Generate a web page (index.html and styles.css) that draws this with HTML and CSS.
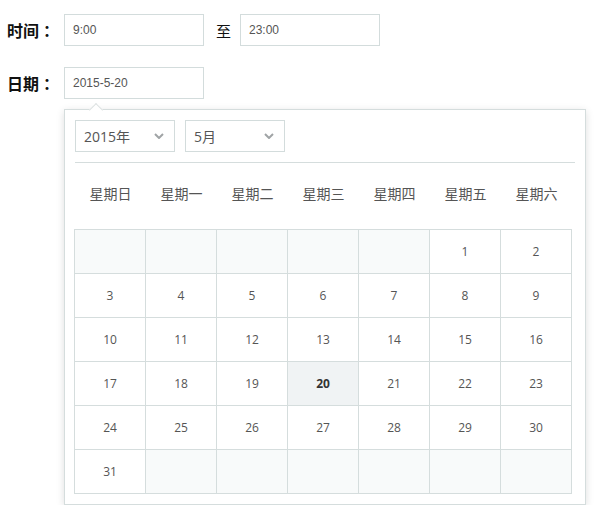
FILE: index.html
```html
<!DOCTYPE html>
<html>
<head>
<meta charset="utf-8">
<link rel="stylesheet" href="styles.css">
</head>
<body>
<div class="form">
  <div class="row">
    <span class="label">时间<span class="colon">：</span></span>
    <div class="input">9:00</div>
    <span class="sep">至</span>
    <div class="input">23:00</div>
  </div>
  <div class="row2">
    <span class="label label2">日期<span class="colon">：</span></span>
    <div class="field">
      <div class="input">2015-5-20</div>
      <div class="popup">
        <div class="arrow"></div>
        <div class="selects">
          <div class="select"><span>2015年</span><svg width="10" height="6" viewBox="0 0 10 6"><polyline points="1,1 5,5 9,1" fill="none" stroke="#a0a4a6" stroke-width="2"/></svg></div>
          <div class="select"><span>5月</span><svg width="10" height="6" viewBox="0 0 10 6"><polyline points="1,1 5,5 9,1" fill="none" stroke="#a0a4a6" stroke-width="2"/></svg></div>
        </div>
        <div class="divider"></div>
        <div class="weekdays">
          <span>星期日</span><span>星期一</span><span>星期二</span><span>星期三</span><span>星期四</span><span>星期五</span><span>星期六</span>
        </div>
        <div class="days">
          <div class="day empty"></div><div class="day empty"></div><div class="day empty"></div><div class="day empty"></div><div class="day empty"></div><div class="day">1</div><div class="day">2</div>
          <div class="day">3</div><div class="day">4</div><div class="day">5</div><div class="day">6</div><div class="day">7</div><div class="day">8</div><div class="day">9</div>
          <div class="day">10</div><div class="day">11</div><div class="day">12</div><div class="day">13</div><div class="day">14</div><div class="day">15</div><div class="day">16</div>
          <div class="day">17</div><div class="day">18</div><div class="day">19</div><div class="day selected">20</div><div class="day">21</div><div class="day">22</div><div class="day">23</div>
          <div class="day">24</div><div class="day">25</div><div class="day">26</div><div class="day">27</div><div class="day">28</div><div class="day">29</div><div class="day">30</div>
          <div class="day">31</div><div class="day empty"></div><div class="day empty"></div><div class="day empty"></div><div class="day empty"></div><div class="day empty"></div><div class="day empty"></div>
        </div>
      </div>
    </div>
  </div>
</div>
</body>
</html>
```

FILE: styles.css
```css
html, body {
  margin: 0;
  padding: 0;
  background: #fff;
}
body {
  font-family: "Open Sans", "Noto Sans CJK SC", sans-serif;
  color: #555;
}
.form {
  padding: 14px 0 0 7px;
}
.row {
  display: flex;
  align-items: center;
  height: 32px;
}
.row2 {
  display: flex;
  align-items: flex-start;
  margin-top: 21px;
}
.label {
  width: 57px;
  font-family: "Noto Sans CJK SC", sans-serif;
  font-size: 16px;
  font-weight: bold;
  color: #111;
}
.colon {
  font-family: "Noto Sans CJK TC", sans-serif;
}
.label2 {
  line-height: 32px;
}
.input {
  box-sizing: border-box;
  width: 140px;
  height: 32px;
  border: 1px solid #d3dcdc;
  padding-left: 8px;
  font-family: "Liberation Sans", "Noto Sans CJK SC", sans-serif;
  font-size: 12px;
  line-height: 30px;
  color: #555;
}
.sep {
  margin: 0 9px 0 12px;
  font-family: "Noto Sans CJK SC", sans-serif;
  font-size: 15px;
  color: #111;
}
.field {
  display: flex;
  flex-direction: column;
  align-items: flex-start;
}
.popup {
  position: relative;
  margin-top: 10px;
  width: 500px;
  padding: 10px;
  border: 1px solid #d5dddd;
  background: #fff;
  box-shadow: 0 2px 8px rgba(0, 0, 0, 0.13);
}
.arrow {
  position: absolute;
  top: -5px;
  left: 26px;
  width: 9px;
  height: 9px;
  background: #fff;
  border-top: 1px solid #dde2e2;
  border-left: 1px solid #dde2e2;
  transform: rotate(45deg);
}
.selects {
  display: flex;
  gap: 10px;
}
.select {
  box-sizing: border-box;
  width: 100px;
  height: 32px;
  border: 1px solid #d3dcdc;
  display: flex;
  align-items: center;
  justify-content: space-between;
  padding: 0 10px 0 8px;
  font-family: "Open Sans", "Noto Sans CJK SC", sans-serif;
  font-size: 14px;
  color: #555;
}
.divider {
  margin-top: 10px;
  height: 1px;
  background: #d5dddd;
}
.weekdays {
  display: grid;
  grid-template-columns: repeat(7, 71px);
  margin-left: -1px;
  padding-left: 1px;
  height: 66px;
  align-items: center;
  font-family: "Noto Sans CJK SC", sans-serif;
  font-size: 14px;
  color: #555;
}
.weekdays span {
  text-align: center;
  padding-bottom: 6px;
}
.days {
  display: grid;
  grid-template-columns: repeat(7, 71px);
  grid-auto-rows: 44px;
  margin-left: -1px;
  width: 498px;
  border-left: 1px solid #d5dddd;
  border-top: 1px solid #d5dddd;
  box-sizing: border-box;
}
.day {
  border-right: 1px solid #d5dddd;
  border-bottom: 1px solid #d5dddd;
  display: flex;
  align-items: center;
  justify-content: center;
  font-size: 12px;
  color: #555;
}
.day.empty {
  background: #f8fafa;
}
.day.selected {
  background: #f0f3f4;
  font-weight: bold;
  color: #333;
}
```
